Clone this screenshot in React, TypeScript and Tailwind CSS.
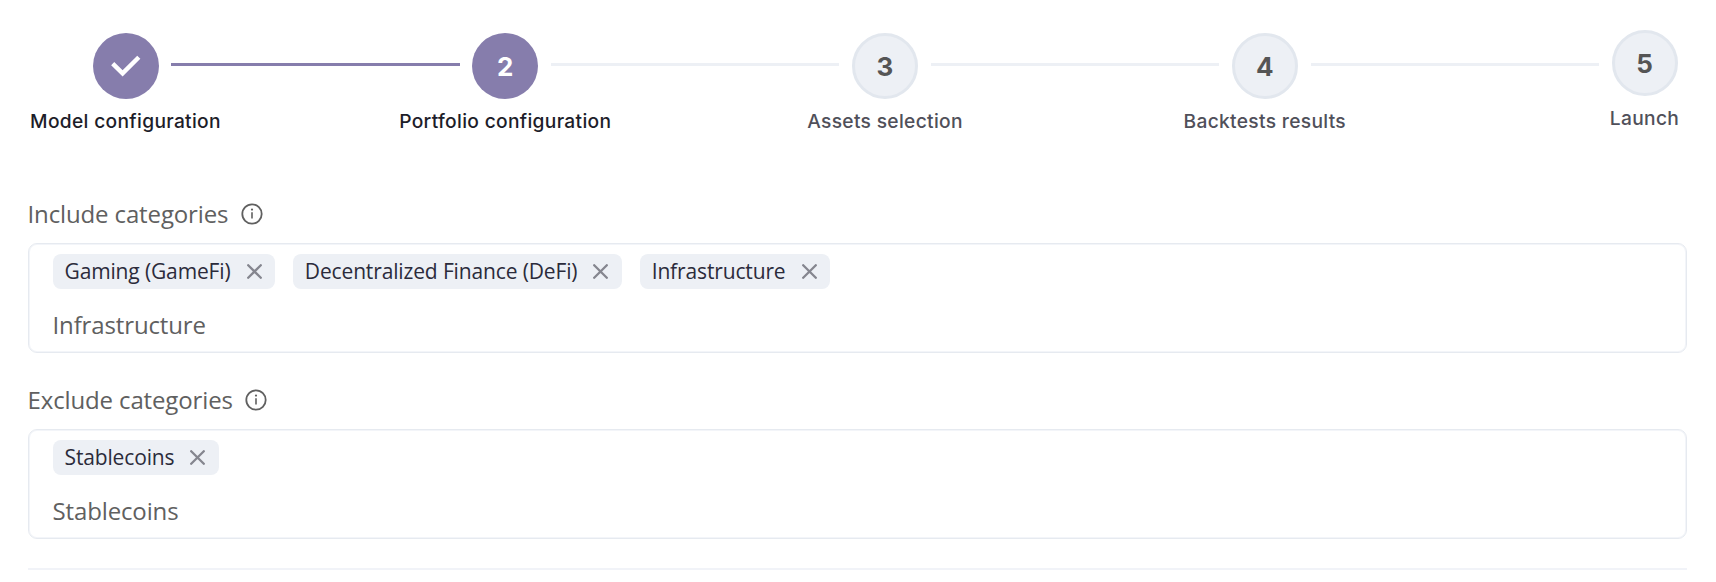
import React from "react";

const steps = ["Model configuration", "Portfolio configuration", "Assets selection", "Backtests results", "Launch"];

function Stepper({ current }: { current: number }) {
  return (
    <ol className="flex h-[146px] items-start pt-[30px] pr-[38.5px] pl-[92.5px] font-[Inter,sans-serif]">
      {steps.map((label, i) => {
        const reached = i <= current;
        const last = i === steps.length - 1;
        return (
          <React.Fragment key={label}>
            <li className={`flex w-[66px] shrink-0 flex-col items-center ${last ? "" : "pt-[3px]"}`}>
              <div
                className={`flex size-[66px] items-center justify-center rounded-full text-[26px] leading-none font-bold ${
                  reached ? "bg-[#867dac] text-white" : "border-[3px] border-[#e2e7ee] bg-[#edf0f5] text-[#555555]"
                }`}
              >
                {i < current ? (
                  <svg width="66" height="66" viewBox="0 0 66 66" fill="none" stroke="#fff" strokeWidth="4.4">
                    <path d="M19.7 30.6 L29.6 40.4 L45.8 24.2" />
                  </svg>
                ) : (
                  <span className="pt-px">{i + 1}</span>
                )}
              </div>
              <span
                className={`mt-[10px] text-[19.2px] leading-6 font-medium tracking-[0.32px] whitespace-nowrap ${
                  reached ? "text-[#1d1d29]" : "text-[#50505a]"
                }`}
              >
                {label}
              </span>
            </li>
            {!last && (
              <li
                aria-hidden
                className={`mx-[12.75px] mt-[33px] h-[3px] flex-1 ${i < current ? "bg-[#867dac]" : "bg-[#edf0f5]"}`}
              />
            )}
          </React.Fragment>
        );
      })}
    </ol>
  );
}

function Tag({ text }: { text: string }) {
  return (
    <span className="flex h-[35px] items-center gap-[16px] rounded-lg bg-[#edf0f5] pr-[13.3px] pl-[12px] text-[21px] leading-none tracking-[-0.14px] text-[#2b2b3b]">
      <span className="whitespace-nowrap">{text}</span>
      <svg width="15" height="15" viewBox="0 0 15 15" fill="none" stroke="#85868f" strokeWidth="2.3" strokeLinecap="round">
        <path d="M1.2 1.2 L13.8 13.8 M13.8 1.2 L1.2 13.8" />
      </svg>
    </span>
  );
}

function CategoryField({ label, tags, value }: { label: string; tags: string[]; value: string }) {
  return (
    <section className="h-[186px]">
      <div className="flex h-[43px] items-center gap-[12.5px] text-[24px] leading-8 tracking-[-0.13px] text-[#606060]">
        <span className="whitespace-nowrap">{label}</span>
        <svg width="22" height="22" viewBox="0 0 22 22" fill="none" stroke="#606060">
          <circle cx="11" cy="11" r="9.7" strokeWidth="1.8" />
          <path d="M11 9.3 V15.6" strokeWidth="1.6" />
          <circle cx="11" cy="6.6" r="1.1" fill="#606060" stroke="none" />
        </svg>
      </div>
      <div className="mt-[8px] h-[110px] rounded-[9px] border border-[#e6eaf0] pt-[9.5px] pl-[24px] shadow-[inset_0_0_0_1px_#f3f5f9]">
        <div className="flex gap-[18px]">
          {tags.map((t) => (
            <Tag key={t} text={t} />
          ))}
        </div>
        <div className="mt-[20px] text-[24px] leading-8 tracking-[-0.13px] text-[#606060]">{value}</div>
      </div>
    </section>
  );
}

export default function App() {
  return (
    <main className="h-[582px] w-[1716px] overflow-hidden bg-white">
      <Stepper current={1} />
      <div className="ml-[27.5px] mt-[46px] w-[1659.5px] font-['Open_Sans',sans-serif]">
        <CategoryField label="Include categories" tags={["Gaming (GameFi)", "Decentralized Finance (DeFi)", "Infrastructure"]} value="Infrastructure" />
        <CategoryField label="Exclude categories" tags={["Stablecoins"]} value="Stablecoins" />
        <hr className="mt-[4px] border-t-2 border-[#f1f3f8]" />
      </div>
    </main>
  );
}
